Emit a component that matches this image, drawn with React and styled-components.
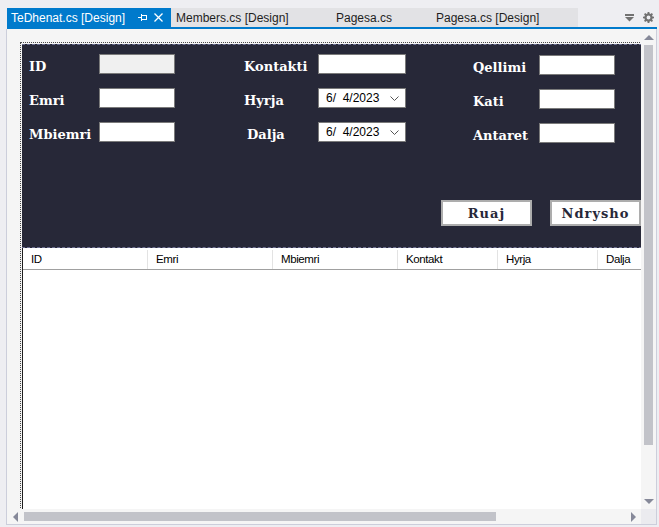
import React from 'react';
import styled, { createGlobalStyle } from 'styled-components';

const GlobalStyle = createGlobalStyle`
  html, body { margin: 0; padding: 0; background: #eeeef2; }
  * { box-sizing: border-box; }
`;

const Window = styled.div`
  width: 659px;
  height: 527px;
  padding: 8px 2px 2px 6px;
  display: flex;
  flex-direction: column;
  background: #eeeef2;
  font-family: "Liberation Sans", Arial, sans-serif;
  overflow: hidden;
`;

const TabBar = styled.div`
  display: flex;
  height: 19px;
  padding-left: 1px;
`;

const Tab = styled.div`
  display: flex;
  align-items: center;
  width: ${p => p.$width}px;
  padding-left: ${p => p.$pad}px;
  background: ${p => (p.$active ? '#007acc' : '#e2e2e5')};
  color: ${p => (p.$active ? '#ffffff' : '#1e1e1e')};
  font-size: 12px;
  white-space: nowrap;
`;

const TabIcons = styled.div`
  display: flex;
  align-items: center;
  gap: 6px;
  margin-left: 13px;
`;

const Tools = styled.div`
  display: flex;
  align-items: center;
  gap: 9px;
  margin-left: auto;
  padding-right: 3px;
`;

const BlueLine = styled.div`
  height: 2px;
  margin-left: 1px;
  background: #007acc;
`;

const Frame = styled.div`
  flex: 1;
  display: grid;
  grid-template-columns: 1fr 15px;
  grid-template-rows: 1fr 15px;
  border: 1px solid #cccedb;
  border-top: none;
  background: #f5f5f5;
  min-height: 0;
`;

const Viewport = styled.div`
  overflow: hidden;
  padding: 13px 0 0 13px;
`;

const Host = styled.div`
  width: 644px;
  height: 520px;
  border: 1px dotted #4a4a4a;
  padding: 1px;
`;

const Panel = styled.div`
  height: 204px;
  background: #272838;
  border-top: 1px dashed #6c6f92;
  border-bottom: 1px dashed #6c6f92;
  padding: 9px 0 0 7px;
`;

const Fields = styled.div`
  display: flex;
  gap: 69px;
`;

const FieldGroup = styled.div`
  display: grid;
  grid-template-columns: ${p => p.$labelWidth}px ${p => p.$inputWidth}px;
  grid-auto-rows: 20px;
  row-gap: 14px;
  align-items: center;
  margin-top: ${p => p.$offset || 0}px;
  margin-left: ${p => p.$shift || 0}px;
`;

const Label = styled.span`
  padding-top: 5px;
  padding-left: ${p => p.$indent || 0}px;
  color: #ffffff;
  font-family: "DejaVu Serif", "Liberation Serif", serif;
  font-weight: bold;
  font-size: 13px;
  white-space: nowrap;
`;

const TextBox = styled.div`
  height: 20px;
  border: 1px solid #7a7a7a;
  background: ${p => (p.$readOnly ? '#f0f0f0' : '#ffffff')};
`;

const DateBox = styled.div`
  height: 20px;
  display: flex;
  align-items: center;
  justify-content: space-between;
  padding: 0 6px 0 7px;
  border: 1px solid #7a7a7a;
  background: #ffffff;
  color: #000;
  font-size: 12px;
  white-space: pre;
`;

const ButtonRow = styled.div`
  display: flex;
  justify-content: flex-end;
  gap: 18px;
  margin-top: 57px;
  padding-right: 21px;
`;

const Button = styled.div`
  width: 91px;
  height: 26px;
  display: flex;
  align-items: center;
  justify-content: center;
  border: 2px solid #adadad;
  background: #ffffff;
  color: #272838;
  font-family: "DejaVu Serif", "Liberation Serif", serif;
  font-weight: bold;
  font-size: 13px;
  letter-spacing: 1px;
`;

const DataGrid = styled.div`
  height: 300px;
  background: #ffffff;
  border-left: 1px solid #1e1e1e;
  padding-top: 2px;
`;

const HeaderRow = styled.div`
  display: flex;
  height: 20px;
  border-bottom: 1px solid #a0a0a0;
`;

const HeaderCell = styled.div`
  flex: 0 0 ${p => p.$width}px;
  padding-left: 8px;
  border-right: 1px solid #e3e3e3;
  font-size: 11.5px;
  letter-spacing: -0.4px;
  line-height: 19px;
  color: #000;
`;

const VScroll = styled.div`
  display: flex;
  flex-direction: column;
  align-items: center;
  background: #f5f5f5;
`;

const HScroll = styled.div`
  display: flex;
  align-items: center;
  background: #f5f5f5;
`;

const ArrowBox = styled.div`
  flex: 0 0 16px;
  width: ${p => (p.$horizontal ? '16px' : '100%')};
  height: ${p => (p.$horizontal ? '100%' : '16px')};
  display: flex;
  align-items: center;
  justify-content: center;
`;

const Thumb = styled.div`
  background: #c2c3c9;
  width: ${p => (p.$horizontal ? `${p.$length}px` : '9px')};
  height: ${p => (p.$horizontal ? '9px' : `${p.$length}px`)};
  margin-left: ${p => (p.$horizontal ? '1px' : '0')};
`;

const Spacer = styled.div`
  flex: 1;
`;

const Corner = styled.div`
  background: #ebebef;
`;

const Arrow = ({ dir }) => {
  const pts = {
    up: '0,5 5,0 10,5',
    down: '0,0 10,0 5,5',
    left: '5,0 5,10 0,5',
    right: '0,0 0,10 5,5',
  }[dir];
  const horiz = dir === 'left' || dir === 'right';
  return (
    <svg width={horiz ? 5 : 10} height={horiz ? 10 : 5} viewBox={horiz ? '0 0 5 10' : '0 0 10 5'}>
      <polygon points={pts} fill="#868999" />
    </svg>
  );
};

const Chevron = () => (
  <svg width="9" height="5" viewBox="0 0 9 5">
    <polyline points="0.5,0.5 4.5,4.5 8.5,0.5" fill="none" stroke="#555" strokeWidth="1" />
  </svg>
);

const PinIcon = () => (
  <svg width="10" height="9" viewBox="0 0 10 9">
    <line x1="0" y1="4.5" x2="3" y2="4.5" stroke="#fff" />
    <line x1="3.5" y1="1" x2="3.5" y2="8" stroke="#fff" />
    <rect x="3.5" y="2.5" width="5" height="4" fill="none" stroke="#fff" />
  </svg>
);

const CloseIcon = () => (
  <svg width="9" height="9" viewBox="0 0 9 9">
    <path d="M0.5 0.5 L8.5 8.5 M8.5 0.5 L0.5 8.5" stroke="#fff" strokeWidth="1.3" />
  </svg>
);

const DropIcon = () => (
  <svg width="9" height="8" viewBox="0 0 9 8">
    <rect x="0" y="0" width="9" height="2" fill="#717171" />
    <polygon points="0,3 9,3 4.5,7.5" fill="#717171" />
  </svg>
);

const GearIcon = () => (
  <svg width="11" height="11" viewBox="0 0 16 16">
    <path
      fill="#717171"
      d="M6.8 0h2.4l.4 2.2 1.4.6 1.8-1.3 1.7 1.7-1.3 1.8.6 1.4 2.2.4v2.4l-2.2.4-.6 1.4 1.3 1.8-1.7 1.7-1.8-1.3-1.4.6-.4 2.2H6.8l-.4-2.2-1.4-.6-1.8 1.3-1.7-1.7 1.3-1.8-.6-1.4L0 9.2V6.8l2.2-.4.6-1.4-1.3-1.8 1.7-1.7 1.8 1.3 1.4-.6zM8 5.2A2.8 2.8 0 1 0 8 10.8 2.8 2.8 0 1 0 8 5.2z"
    />
  </svg>
);

const tabs = [
  { title: 'Members.cs [Design]', width: 159, pad: 5 },
  { title: 'Pagesa.cs', width: 100, pad: 6 },
  { title: 'Pagesa.cs [Design]', width: 148, pad: 6 },
];

const columns = [
  { name: 'ID', width: 125 },
  { name: 'Emri', width: 125 },
  { name: 'Mbiemri', width: 125 },
  { name: 'Kontakt', width: 100 },
  { name: 'Hyrja', width: 100 },
  { name: 'Dalja', width: 100 },
];

const DateField = () => (
  <DateBox>
    <span>6/  4/2023</span>
    <Chevron />
  </DateBox>
);

export default function App() {
  return (
    <>
      <GlobalStyle />
      <Window>
        <TabBar>
          <Tab $active $width={164} $pad={4}>
            TeDhenat.cs [Design]
            <TabIcons>
              <PinIcon />
              <CloseIcon />
            </TabIcons>
          </Tab>
          {tabs.map(t => (
            <Tab key={t.title} $width={t.width} $pad={t.pad}>
              {t.title}
            </Tab>
          ))}
          <Tools>
            <DropIcon />
            <GearIcon />
          </Tools>
        </TabBar>
        <BlueLine />
        <Frame>
          <Viewport>
            <Host>
              <Panel>
                <Fields>
                  <FieldGroup $labelWidth={70} $inputWidth={76}>
                    <Label>ID</Label>
                    <TextBox $readOnly />
                    <Label>Emri</Label>
                    <TextBox />
                    <Label>Mbiemri</Label>
                    <TextBox />
                  </FieldGroup>
                  <FieldGroup $labelWidth={74} $inputWidth={88}>
                    <Label>Kontakti</Label>
                    <TextBox />
                    <Label>Hyrja</Label>
                    <DateField />
                    <Label $indent={3}>Dalja</Label>
                    <DateField />
                  </FieldGroup>
                  <FieldGroup $labelWidth={66} $inputWidth={76} $offset={1} $shift={-2}>
                    <Label>Qellimi</Label>
                    <TextBox />
                    <Label>Kati</Label>
                    <TextBox />
                    <Label>Antaret</Label>
                    <TextBox />
                  </FieldGroup>
                </Fields>
                <ButtonRow>
                  <Button>Ruaj</Button>
                  <Button>Ndrysho</Button>
                </ButtonRow>
              </Panel>
              <DataGrid>
                <HeaderRow>
                  {columns.map(c => (
                    <HeaderCell key={c.name} $width={c.width}>
                      {c.name}
                    </HeaderCell>
                  ))}
                </HeaderRow>
              </DataGrid>
            </Host>
          </Viewport>
          <VScroll>
            <ArrowBox>
              <Arrow dir="up" />
            </ArrowBox>
            <Thumb $length={400} />
            <Spacer />
            <ArrowBox>
              <Arrow dir="down" />
            </ArrowBox>
          </VScroll>
          <HScroll>
            <ArrowBox $horizontal>
              <Arrow dir="left" />
            </ArrowBox>
            <Thumb $horizontal $length={472} />
            <Spacer />
            <ArrowBox $horizontal>
              <Arrow dir="right" />
            </ArrowBox>
          </HScroll>
          <Corner />
        </Frame>
      </Window>
    </>
  );
}
